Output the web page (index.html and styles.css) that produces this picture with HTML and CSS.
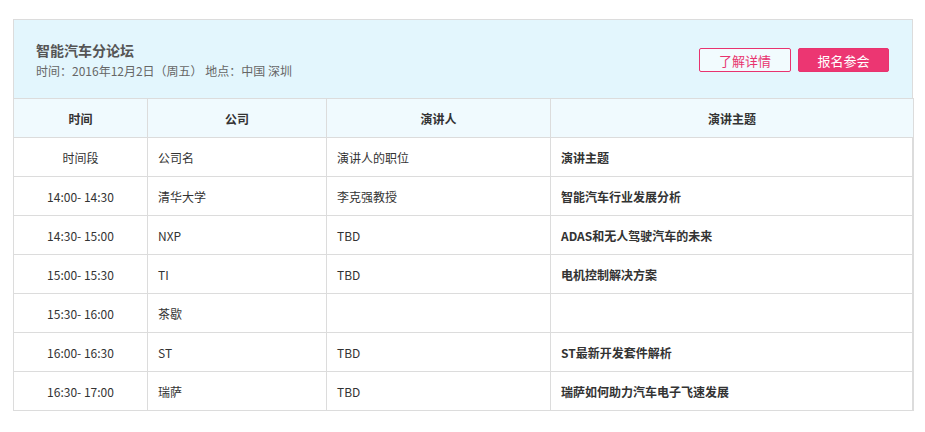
FILE: index.html
```html
<!DOCTYPE html>
<html lang="zh">
<head>
<meta charset="utf-8">
<link rel="stylesheet" href="styles.css">
</head>
<body>
<div class="box">
  <div class="head">
    <div class="info">
      <div class="title">智能汽车分论坛</div>
      <div class="meta">时间：2016年12月2日（周五） 地点：中国 深圳</div>
    </div>
    <div class="btns">
      <a class="btn ghost">了解详情</a>
      <a class="btn solid">报名参会</a>
    </div>
  </div>
  <table class="agenda">
    <colgroup><col class="c1"><col class="c2"><col class="c3"><col class="c4"></colgroup>
    <thead>
      <tr><th>时间</th><th>公司</th><th>演讲人</th><th>演讲主题</th></tr>
    </thead>
    <tbody>
      <tr><td class="t">时间段</td><td>公司名</td><td>演讲人的职位</td><td class="b">演讲主题</td></tr>
      <tr><td class="t">14:00- 14:30</td><td>清华大学</td><td>李克强教授</td><td class="b">智能汽车行业发展分析</td></tr>
      <tr><td class="t">14:30- 15:00</td><td>NXP</td><td>TBD</td><td class="b">ADAS和无人驾驶汽车的未来</td></tr>
      <tr><td class="t">15:00- 15:30</td><td>TI</td><td>TBD</td><td class="b">电机控制解决方案</td></tr>
      <tr><td class="t">15:30- 16:00</td><td>茶歇</td><td></td><td class="b"></td></tr>
      <tr><td class="t">16:00- 16:30</td><td>ST</td><td>TBD</td><td class="b">ST最新开发套件解析</td></tr>
      <tr><td class="t">16:30- 17:00</td><td>瑞萨</td><td>TBD</td><td class="b">瑞萨如何助力汽车电子飞速发展</td></tr>
    </tbody>
  </table>
</div>
</body>
</html>
```
FILE: styles.css
```css
html, body { margin: 0; padding: 0; background: #fff; }
body {
  font-family: "Microsoft YaHei", "Noto Sans CJK SC", "Liberation Sans", sans-serif;
  font-size: 12px;
  color: #333;
  padding: 19px 0 0 13px;
}
.box {
  width: 900px;
  border: 1px solid #dcdcdc;
  border-bottom: none;
  box-sizing: border-box;
}
.head {
  background: #e3f6fd;
  height: 78px;
  display: flex;
  align-items: flex-start;
  justify-content: space-between;
  padding: 0 23px 0 22px;
  box-sizing: border-box;
}
.info { padding-top: 20px; }
.title {
  font-size: 14px;
  font-weight: bold;
  color: #555;
  line-height: 20px;
}
.meta {
  font-size: 12px;
  color: #666;
  line-height: 20px;
  margin-top: 1px;
}
.btns { display: flex; gap: 7px; padding-top: 28px; }
.btn {
  display: flex;
  align-items: center;
  justify-content: center;
  width: 92px;
  height: 24px;
  box-sizing: border-box;
  border: 1px solid #e8336f;
  border-radius: 2px;
  font-size: 13px;
}
.ghost { background: #f2fbfe; color: #e8336f; }
.solid { background: #ec3672; color: #fff; width: 91px; }
.agenda {
  width: 900px;
  margin-left: -1px;
  border-collapse: collapse;
  table-layout: fixed;
}
.c1 { width: 134px; }
.c2 { width: 179px; }
.c3 { width: 224px; }
.c4 { width: 363px; }
.agenda th, .agenda td {
  border: 1px solid #dcdcdc;
  height: 38px;
  padding: 0 10px;
  font-size: 12px;
}
.agenda th {
  background: #f0fafe;
  font-weight: bold;
  color: #333;
  text-align: center;
}
.agenda td { text-align: left; color: #333; }
.agenda td.t { text-align: center; }
.agenda td.b { font-weight: bold; }
```
